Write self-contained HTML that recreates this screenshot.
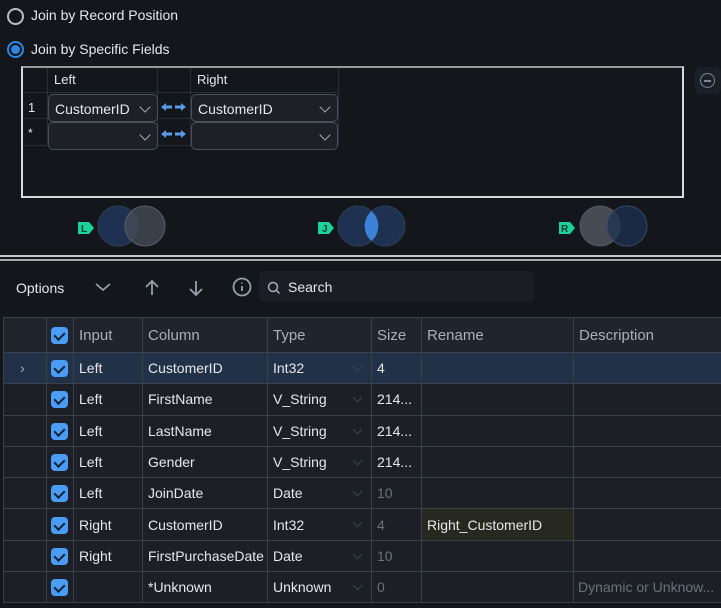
<!DOCTYPE html>
<html><head><meta charset="utf-8"><style>
*{box-sizing:border-box;margin:0;padding:0}
body{width:721px;height:608px;background:#13161b;font-family:"Liberation Sans",sans-serif;color:#e6e8ec;position:relative;overflow:hidden;font-size:14px}
.abs{position:absolute}
.radio{position:absolute;width:17px;height:17px;border-radius:50%;border:2px solid #b9bcc3}
.radio.on{border-color:#2f86e0}
.radio.on::after{content:"";position:absolute;left:2px;top:2px;width:9px;height:9px;border-radius:50%;background:#2f86e0}
.lbl{position:absolute;font-size:14px;color:#e6e8ec}
.jbox{position:absolute;left:21px;top:66px;width:663px;height:132px;border:2px solid #d9d9d9;border-top-color:#9a9a9a;background:#13161b}
.dd{position:absolute;height:28px;border:1px solid #4a4f5a;border-radius:5px;background:#1d2027;font-size:14px;padding:6px 0 0 6px}
.chev{position:absolute;right:8px;top:8px;width:8px;height:8px;border-right:1.5px solid #aab;border-bottom:1.5px solid #aab;transform:rotate(45deg)}
table{position:absolute;left:3px;top:317px;width:725px;border-collapse:collapse;table-layout:fixed}
td{border:1.5px solid #3b404b;background:#1c1f26;height:31.3px;font-size:14px;padding:0 0 0 5px;white-space:nowrap;overflow:hidden;position:relative}
tr.h td{height:35px;background:#20242c;color:#a9b0bb;font-size:15px}
tr.sel td{background:#213148}
.cb{display:inline-block;width:17px;height:17px;border-radius:4px;background:#4a9cf5;vertical-align:middle;position:relative}
.cb::after{content:"";position:absolute;left:5px;top:3px;width:5px;height:8px;border-right:2px solid #123;border-bottom:2px solid #123;transform:rotate(45deg)}
.dim{color:#6c717b}
.tc .c2{position:absolute;right:10px;top:10px;width:7px;height:7px;border-right:1px solid #3d4350;border-bottom:1px solid #3d4350;transform:rotate(45deg)}
</style></head><body>
<div class="radio" style="left:7px;top:8px"></div>
<div class="lbl" style="left:31px;top:7px">Join by Record Position</div>
<div class="radio on" style="left:7px;top:41px"></div>
<div class="lbl" style="left:31px;top:41px">Join by Specific Fields</div>

<div class="jbox">
 <div class="abs" style="left:0;top:24px;width:315px;height:1px;background:#2a2e36"></div>
 <div class="abs" style="left:0;top:50px;width:315px;height:1px;background:#2a2e36"></div>
 <div class="abs" style="left:0;top:77px;width:315px;height:1px;background:#2a2e36"></div>
 <div class="abs" style="left:24px;top:0;width:1px;height:78px;background:#2a2e36"></div>
 <div class="abs" style="left:134px;top:0;width:1px;height:78px;background:#2a2e36"></div>
 <div class="abs" style="left:167px;top:0;width:1px;height:78px;background:#2a2e36"></div>
 <div class="abs" style="left:315px;top:0;width:1px;height:78px;background:#2a2e36"></div>
 <div class="lbl" style="left:31px;top:4px;font-size:13px">Left</div>
 <div class="lbl" style="left:174px;top:4px;font-size:13px">Right</div>
 <div class="lbl" style="left:5px;top:32px;font-size:13px">1</div>
 <div class="lbl" style="left:5px;top:58px;font-size:12px">*</div>
 <div class="dd" style="left:25px;top:26px;width:110px">CustomerID<span class="chev"></span></div>
 <div class="dd" style="left:25px;top:54px;width:110px"><span class="chev"></span></div>
 <div class="dd" style="left:168px;top:26px;width:147px">CustomerID<span class="chev"></span></div>
 <div class="dd" style="left:168px;top:54px;width:147px"><span class="chev"></span></div>
 <svg class="abs" style="left:137px;top:34px" width="28" height="40" fill="#5a9be8">
  <path d="M1 5l5-4v2.5h6v3H6V9z"/><path d="M26 5l-5-4v2.5h-6v3h6V9z"/>
  <path d="M1 32l5-4v2.5h6v3H6V36z"/><path d="M26 32l-5-4v2.5h-6v3h6V36z"/>
 </svg>
</div>
<div class="abs" style="left:695px;top:67px;width:26px;height:27px;border-radius:5px;background:#1a1f28"></div>
<div class="abs" style="left:700px;top:73px;width:15px;height:15px;border-radius:50%;border:1.5px solid #7c8594"></div>
<div class="abs" style="left:704px;top:80px;width:7px;height:1.5px;background:#7c8594"></div>

<svg class="abs" style="left:0;top:200px" width="721" height="55">
 <g font-family="Liberation Sans" font-weight="bold" font-size="10">
 <path d="M78 22h11l5 6-5 6H78z" fill="#1ad39a"/><text x="81" y="32" fill="#0c3a2c">L</text>
 <circle cx="118" cy="26" r="20" fill="#1e3150" stroke="#2e3f5a"/>
 <circle cx="145" cy="26" r="20" fill="#4a4e57" fill-opacity=".75" stroke="#5a5f69"/>
 <path d="M318 22h11l5 6-5 6H318z" fill="#1ad39a"/><text x="322" y="32" fill="#0c3a2c">J</text>
 <circle cx="358" cy="26" r="20" fill="#1e3150" stroke="#2e3f5a"/>
 <circle cx="385" cy="26" r="20" fill="#1e3150" stroke="#2e3f5a"/>
 <path d="M371.5 11a20 20 0 0 1 0 30a20 20 0 0 1 0-30z" fill="#3d82d6"/>
 <path d="M559 22h11l5 6-5 6H559z" fill="#1ad39a"/><text x="561" y="32" fill="#0c3a2c">R</text>
 <circle cx="600" cy="26" r="20" fill="#474b54" stroke="#555a64"/>
 <circle cx="627" cy="26" r="20" fill="#1e3150" fill-opacity=".75" stroke="#3a4a64"/>
 </g>
</svg>
<div class="abs" style="left:0;top:255px;width:721px;height:2px;background:#c9c9c9"></div>
<div class="abs" style="left:0;top:259px;width:721px;height:2px;background:#a9a9a9"></div>

<div class="lbl" style="left:16px;top:280px;font-size:14px">Options</div>
<svg class="abs" style="left:90px;top:276px" width="170" height="24" fill="none" stroke="#9aa0aa" stroke-width="1.8">
 <path d="M6 8l7 6 7-6"/>
 <path d="M62 19V5M56 11l6-6 6 6"/>
 <path d="M106 5v14M100 13l6 6 6-6"/>
 <circle cx="152" cy="11" r="8.5"/><path d="M152 10v5M152 6.5v1"/>
</svg>
<div class="abs" style="left:259px;top:271px;width:275px;height:31px;border-radius:5px;background:#1a1e24"></div>
<svg class="abs" style="left:267px;top:281px" width="14" height="14" fill="none" stroke="#aab" stroke-width="1.5"><circle cx="6" cy="6" r="4.5"/><path d="M9.5 9.5l3 3"/></svg>
<div class="lbl" style="left:288px;top:279px;font-size:14px">Search</div>

<table>
<colgroup><col style="width:43px"><col style="width:27px"><col style="width:69px"><col style="width:125px"><col style="width:104px"><col style="width:50px"><col style="width:152px"><col style="width:155px"></colgroup>
<tr class="h"><td></td><td style="padding-left:4px"><span class="cb"></span></td><td>Input</td><td>Column</td><td>Type</td><td>Size</td><td>Rename</td><td>Description</td></tr>
<tr class="sel"><td style="padding-left:16px;color:#aab">&#8250;</td><td style="padding-left:4px"><span class="cb"></span></td><td>Left</td><td>CustomerID</td><td class="tc">Int32<span class="c2"></span></td><td>4</td><td></td><td></td></tr>
<tr><td></td><td style="padding-left:4px"><span class="cb"></span></td><td>Left</td><td>FirstName</td><td class="tc">V_String<span class="c2"></span></td><td>214...</td><td></td><td></td></tr>
<tr><td></td><td style="padding-left:4px"><span class="cb"></span></td><td>Left</td><td>LastName</td><td class="tc">V_String<span class="c2"></span></td><td>214...</td><td></td><td></td></tr>
<tr><td></td><td style="padding-left:4px"><span class="cb"></span></td><td>Left</td><td>Gender</td><td class="tc">V_String<span class="c2"></span></td><td>214...</td><td></td><td></td></tr>
<tr><td></td><td style="padding-left:4px"><span class="cb"></span></td><td>Left</td><td>JoinDate</td><td class="tc">Date<span class="c2"></span></td><td class="dim">10</td><td></td><td></td></tr>
<tr><td></td><td style="padding-left:4px"><span class="cb"></span></td><td>Right</td><td>CustomerID</td><td class="tc">Int32<span class="c2"></span></td><td class="dim">4</td><td style="background:#27281f">Right_CustomerID</td><td></td></tr>
<tr><td></td><td style="padding-left:4px"><span class="cb"></span></td><td>Right</td><td>FirstPurchaseDate</td><td class="tc">Date<span class="c2"></span></td><td class="dim">10</td><td></td><td></td></tr>
<tr><td></td><td style="padding-left:4px"><span class="cb"></span></td><td></td><td>*Unknown</td><td class="tc">Unknown<span class="c2"></span></td><td class="dim">0</td><td></td><td class="dim" style="padding-left:4px">Dynamic or Unknow...</td></tr>
</table>
</body></html>
